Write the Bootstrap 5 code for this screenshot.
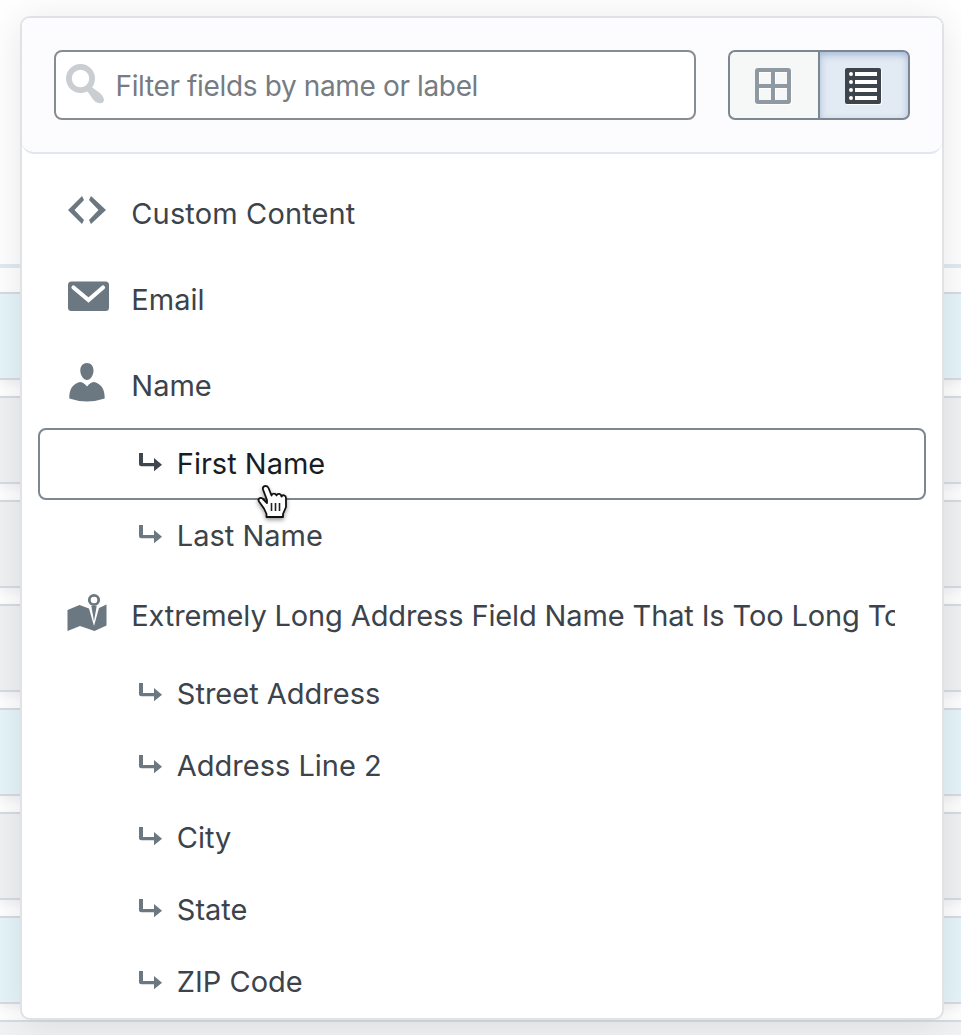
<!DOCTYPE html>
<html lang="en">
<head>
<meta charset="utf-8">
<meta name="viewport" content="width=device-width, initial-scale=1">
<title>Field picker</title>
<link href="https://cdn.jsdelivr.net/npm/bootstrap@5.3.0/dist/css/bootstrap.min.css" rel="stylesheet">
<style>
  body { font-family: Inter, "Liberation Sans", sans-serif; font-size: 29px; line-height: 36px; color: #3c434b; background: #fff; height: 1035px; overflow: hidden; }
  .backdrop-form { inset: 0; overflow: hidden; padding-top: 264px; }
  .divider-line { height: 4px; background: #e0ebf3; margin-bottom: 24px; }
  .form-strip { height: 88px; margin-bottom: 16px; background: #f1f2f3; border: solid #d8dbe1; border-width: 2px 0; box-shadow: 0 4px 8px rgba(70,90,150,.07); flex: none; }
  .form-strip.is-blue { background: #e5f5fa; }
  .picker { margin: 16px 17px 0 20px; height: 1004px; border: 2px solid #dfe3e6; border-radius: 10px; box-shadow: 0 4px 40px rgba(0,0,0,.1); }
  .picker-head { height: 136px; padding: 32px; gap: 32px; background: #fcfcff; border-bottom: 2px solid #e1e6f0; border-radius: 8px 8px 12px 12px; }
  .filter-box { height: 70px; width: 642px; border: 2px solid #878c91; border-radius: 8px; padding-left: 10px; }
  .filter-box svg { margin-bottom: 2px; }
  .filter-box input { font-size: 28px; color: #777b82; padding: 2px 0 0 11.500px; letter-spacing: -.36px; height: 60px; }
  .filter-box input::placeholder { color: #777b82; opacity: 1; }
  .view-switch { width: 182px; height: 70px; }
  .view-switch .btn { width: 92px; flex: none; border: 2px solid #7d8791; border-radius: 7px; padding: 2px 0 0; background: #f5f8f7; --bs-btn-active-bg: #e2eaf3; --bs-btn-active-border-color: #7d8791; }
  .view-switch .btn:first-child { border-right: 0; width: 90px; border-radius: 7px 0 0 7px; }
  .view-switch .btn:first-child svg { margin-right: 2px; }
  .view-switch .btn:last-child { margin-left: 0 !important; border-radius: 0 7px 7px 0; background: #e2eaf3; box-shadow: inset 0 3px 7px rgba(80,120,175,.42); }
  .view-switch .btn:last-child svg { margin-right: 2px; }
  .picker-body { padding: 16px; }
  .field { height: 86px; padding: 2px 31px 0 28.500px; }
  .field > svg { width: 42px; height: 44px; flex: none; margin: -9px 22.800px 0 0; fill: #6b7881; }
  .sub-field { height: 72px; border: 2px solid transparent; border-radius: 8px; padding-left: 99px; }
  .sub-field > svg { width: 23px; height: 20px; margin: -3px 14.800px 0 0; fill: #6b7881; }
  .sub-field.hovered { border-color: #7d8791; color: #181d25; }
  .sub-field.hovered > svg { fill: #3f464e; }
  .caption-text { white-space: nowrap; overflow: hidden; }
  .caption-loose { letter-spacing: .14px; }
  .caption-tight { letter-spacing: -.13px; }
  .hand { left: 254px; top: 482px; filter: drop-shadow(0 2px 2px rgba(0,0,0,.4)); }
</style>
</head>
<body class="position-relative">
<svg class="d-none">
  <symbol id="turn" viewBox="0 0 23 20"><path d="M0 0h4v10h11V5l8 6.700-8 6.500v-5H2.500Q0 13.200 0 10.700z"/></symbol>
</svg>
<div class="backdrop-form position-absolute d-flex flex-column">
  <div class="divider-line flex-shrink-0"></div>
  <div class="form-strip is-blue"></div>
  <div class="form-strip"></div>
  <div class="form-strip"></div>
  <div class="form-strip"></div>
  <div class="form-strip is-blue"></div>
  <div class="form-strip"></div>
  <div class="form-strip is-blue"></div>
  <div class="form-strip"></div>
</div>
<div class="d-flex flex-column">
<main class="picker bg-white position-relative">
  <header class="picker-head d-flex">
    <div class="filter-box bg-white d-flex align-items-center">
      <svg width="38" height="40" viewBox="0 0 38 40" class="flex-shrink-0"><circle cx="14.500" cy="14.500" r="11.600" fill="none" stroke="#caced3" stroke-width="5.800"/><path d="M20 26l5-4q2 2.500 5 4.200Q37.500 31 38 35.500Q38 39 34.500 39.200Q29 39.500 25 32.500Q23 29 20 26z" fill="#caced3"/></svg>
      <input type="text" class="form-control border-0 shadow-none bg-transparent" placeholder="Filter fields by name or label">
    </div>
    <div class="btn-group view-switch">
      <button class="btn d-flex align-items-center justify-content-center" aria-label="Grid view"><svg width="38" height="38" viewBox="0 0 38 38"><g fill="none" stroke="#fff" stroke-width="4"><rect x="4" y="4" width="32" height="32" rx="1"/><path d="M20 4v32M4 20h32"/></g><g fill="none" stroke="#8f99a2" stroke-width="4"><rect x="3" y="3" width="32" height="32" rx="1"/><path d="M19 3v32M3 19h32"/></g></svg></button>
      <button class="btn d-flex align-items-center justify-content-center" aria-label="List view"><svg width="38" height="38" viewBox="0 0 38 38"><rect x="2" y="2" width="36" height="36" rx="2" fill="#fff"/><rect x="1" y="1" width="36" height="36" rx="2" fill="#3e444c"/><g fill="#fff"><path d="M11 5h22v4H11zM11 13h22v4H11zM11 21h22v4H11zM11 29h22v4H11z"/><circle cx="7" cy="7" r="2"/><circle cx="7" cy="15" r="2"/><circle cx="7" cy="23" r="2"/><circle cx="7" cy="31" r="2"/></g></svg></button>
    </div>
  </header>
  <section class="picker-body">
    <div class="field d-flex align-items-center"><svg viewBox="0 0 42 44"><path d="M15 8l2 4-9.500 10L17 32l-2 4L1 22zM24 8l-2 4 9.500 10L22 32l2 4 15-14z"/></svg><span class="caption-text caption-loose">Custom Content</span></div>
    <div class="field d-flex align-items-center"><svg viewBox="0 0 42 44"><rect x="1" y="7.500" width="41" height="29.500" rx="3.500"/><path d="M6.500 13.500L21.500 26L36 13.500" fill="none" stroke="#fff" stroke-width="4.200" stroke-linecap="round"/></svg><span class="caption-text">Email</span></div>
    <div class="field d-flex align-items-center"><svg viewBox="0 0 42 44"><path d="M20 3c4 0 6.500 3 6.500 7.500S23.500 20 20 20s-6.700-5-6.700-9.500S16 3 20 3zM13 22c2 0 4 1 7 4.500C23 23 25 22 27 22c7 1.500 11 7 10.700 16.500Q29 41.500 20 41.500T2.300 38.500C2 29 6 23.500 13 22z"/></svg><span class="caption-text">Name</span></div>
    <div class="sub-field hovered d-flex align-items-center"><svg><use href="#turn"/></svg><span class="caption-text">First Name</span></div>
    <div class="sub-field d-flex align-items-center"><svg><use href="#turn"/></svg><span class="caption-text">Last Name</span></div>
    <div class="field d-flex align-items-center"><svg viewBox="0 0 42 44"><path d="M.5 20l12-5 9.500 3.500 5 17.500L32 18l7.500-3.500v21L27.500 41 13 36 .5 41z"/><path d="M24.300 16L27 31l2.700-15z"/><circle cx="27" cy="10" r="4.700" fill="#fff" stroke="#6b7881" stroke-width="2.800"/></svg><span class="caption-text caption-tight">Extremely Long Address Field Name That Is Too Long To</span></div>
    <div class="sub-field d-flex align-items-center"><svg><use href="#turn"/></svg><span class="caption-text">Street Address</span></div>
    <div class="sub-field d-flex align-items-center"><svg><use href="#turn"/></svg><span class="caption-text">Address Line 2</span></div>
    <div class="sub-field d-flex align-items-center"><svg><use href="#turn"/></svg><span class="caption-text">City</span></div>
    <div class="sub-field d-flex align-items-center"><svg><use href="#turn"/></svg><span class="caption-text">State</span></div>
    <div class="sub-field d-flex align-items-center"><svg><use href="#turn"/></svg><span class="caption-text">ZIP Code</span></div>
  </section>
</main>
</div>
<svg class="hand position-absolute" width="36" height="38" viewBox="0 0 36 38"><path d="M11.500 4C9 4 8.500 6 9.200 8L13 18v3L8.500 16.500C6 15 3.500 17 5 19.500l5 7 2.500 5.500v3H29v-3l3-7V16c0-3-3.500-3.500-4.500-1.500-.5-3-4-3.500-5-1-1-2.500-4.500-2.500-5 0L14.500 6C14 4.500 13 4 11.500 4z" fill="#fff" stroke="#111" stroke-width="1.800" stroke-linejoin="round"/><path d="M17.500 21v8M21.500 21v8M25.500 21v8" stroke="#222" stroke-width="1.600"/></svg>
<script src="https://cdn.jsdelivr.net/npm/bootstrap@5.3.0/dist/js/bootstrap.bundle.min.js"></script>
</body>
</html>
